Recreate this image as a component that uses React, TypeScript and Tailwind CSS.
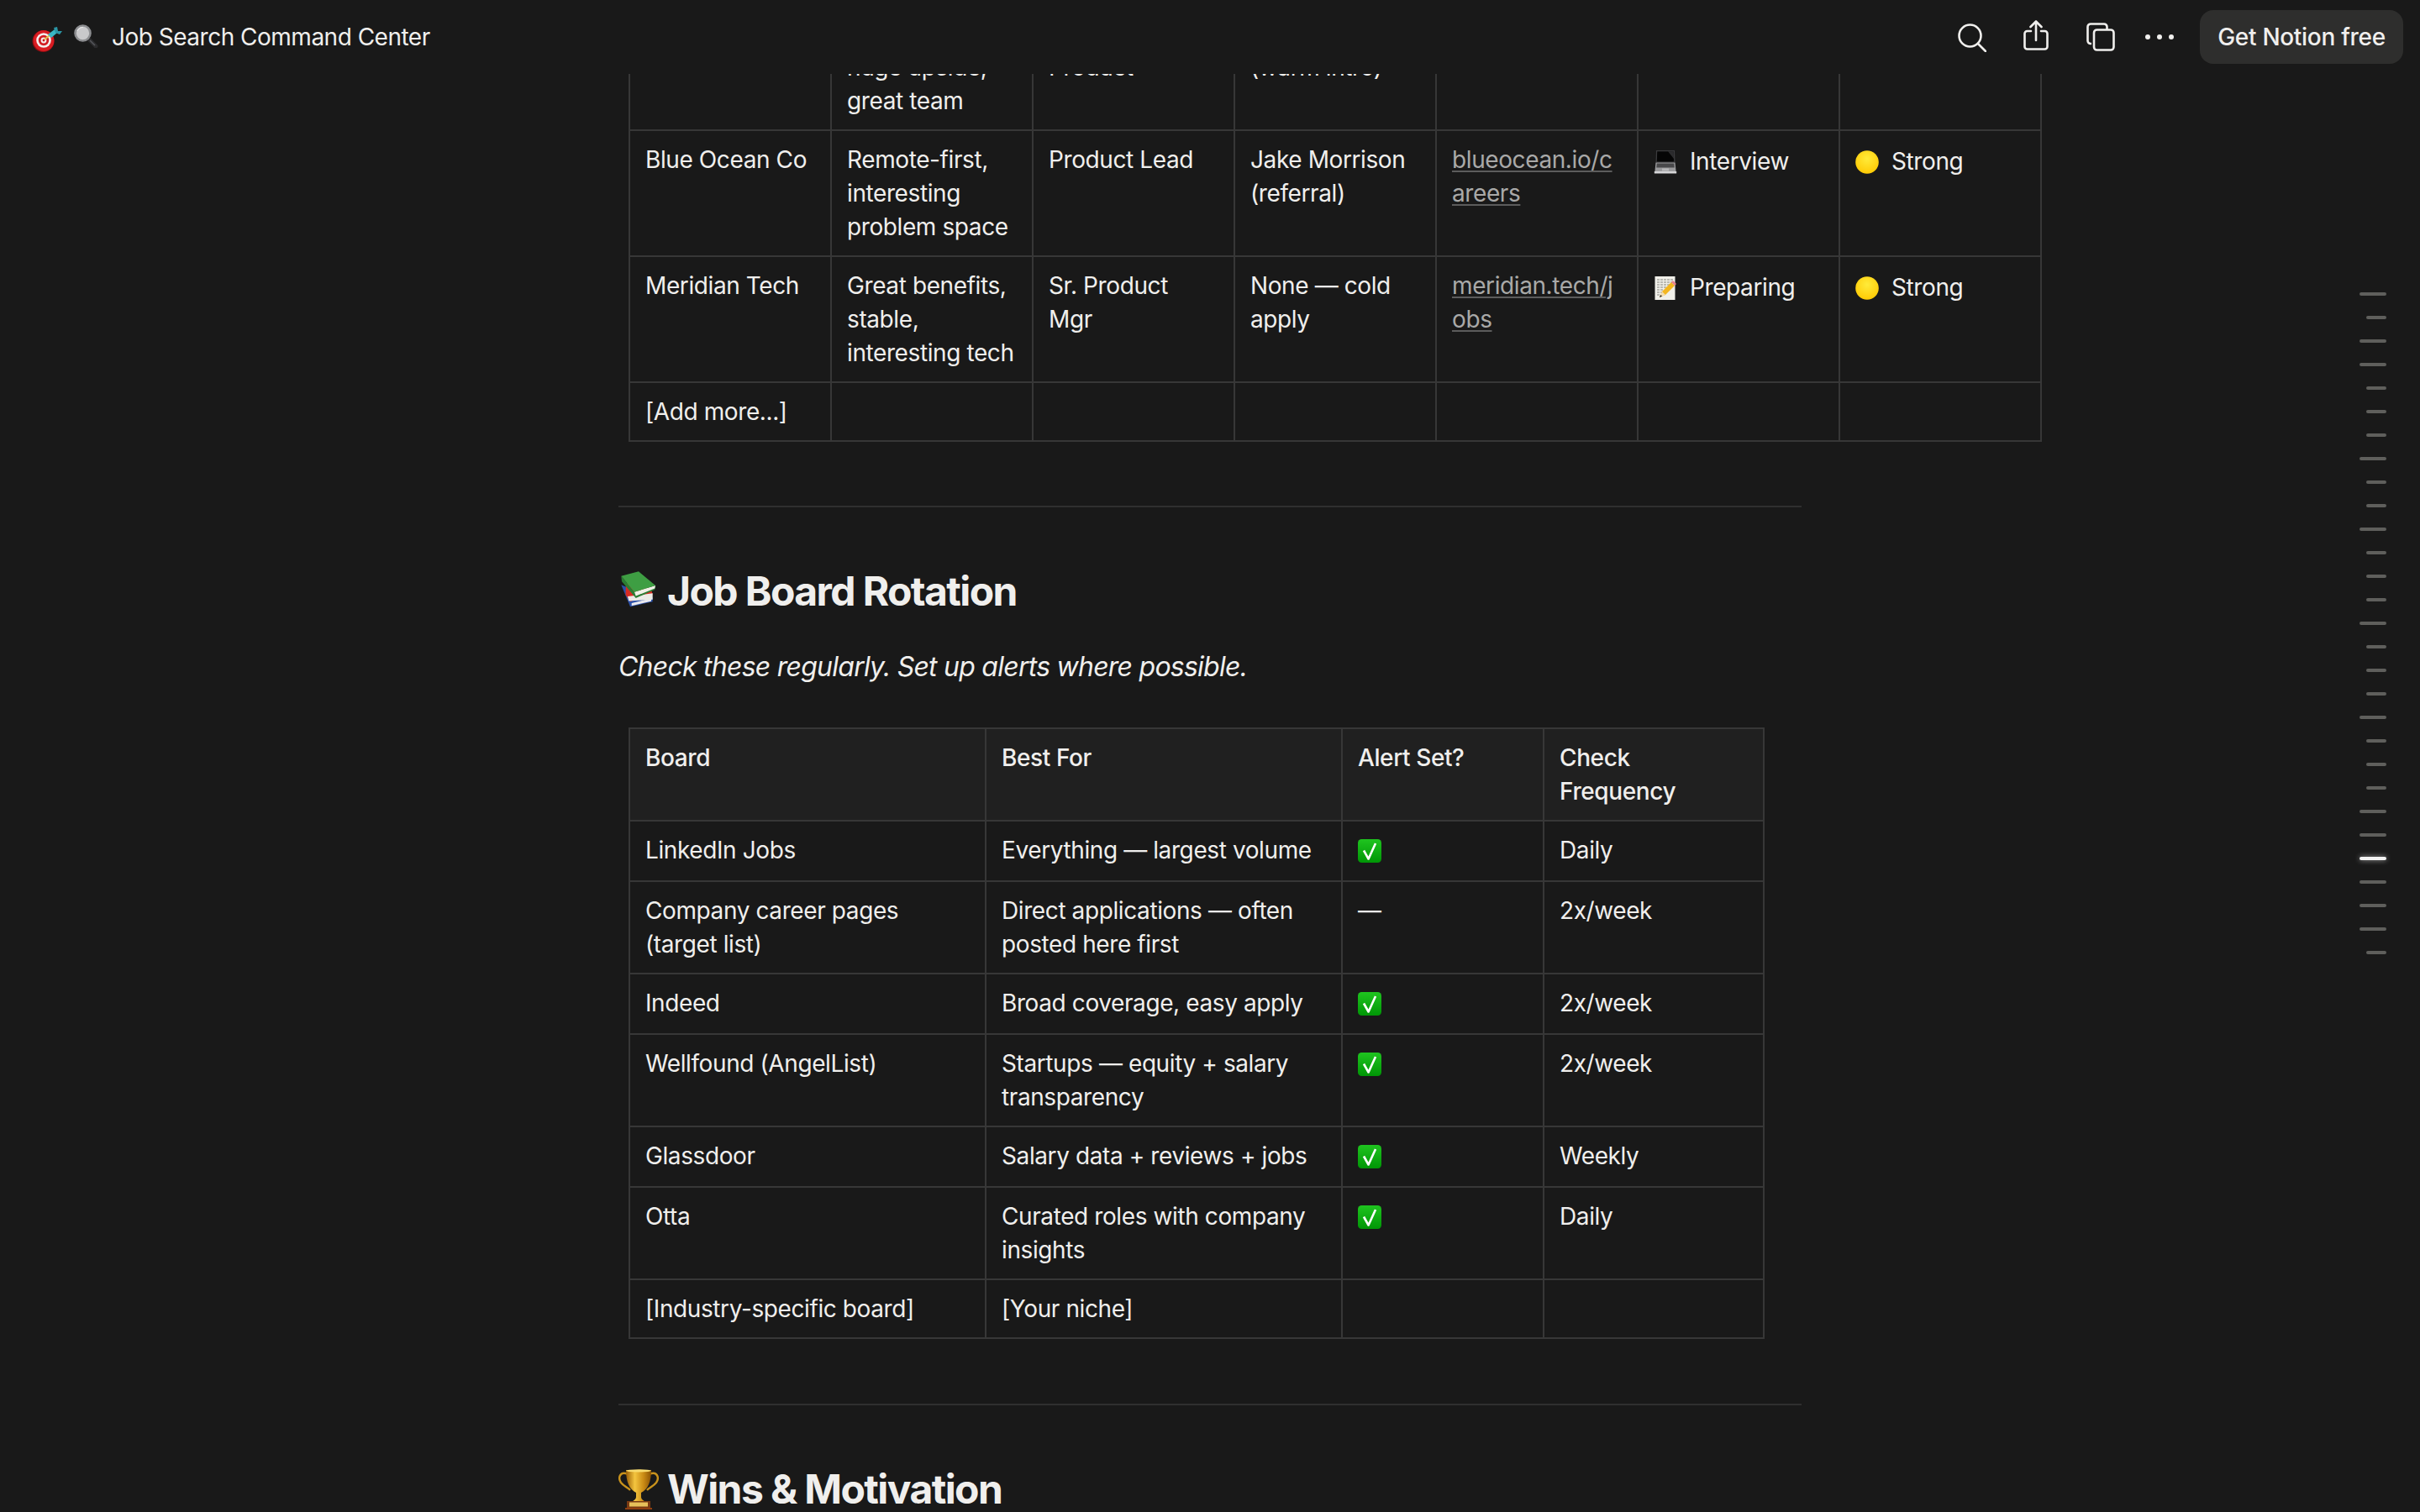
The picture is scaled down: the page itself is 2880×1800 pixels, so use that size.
const FONT = "font-['Inter','Noto_Sans',sans-serif]";
const CELL = "border-2 border-[#373737] px-[18px] py-[14px] align-top";

function Target() {
  return (
    <svg viewBox="0 0 36 30" className="w-[36px] h-[30px] shrink-0">
      <circle cx="13.5" cy="17" r="13" fill="#8f0d12" />
      <circle cx="14" cy="16.5" r="12.4" fill="#d81c22" />
      <circle cx="14" cy="16" r="8.8" fill="#f4eeee" />
      <circle cx="14" cy="16" r="6.2" fill="#d21c22" />
      <circle cx="14" cy="16" r="3.4" fill="#f4eeee" />
      <circle cx="14" cy="16" r="1.4" fill="#c81a20" />
      <path d="M15 15 L21 10" stroke="#e3c04a" strokeWidth="2" />
      <path d="M19 9 L27 3 L30 7 L23 13 Z" fill="#3ab6c4" />
      <path d="M26 1 L30 0 L31 5 L36 5 L33 9 L28 7 Z" fill="#2b96a6" />
    </svg>
  );
}

function Magnifier() {
  return (
    <svg viewBox="0 0 30 28" className="w-[30px] h-[28px] shrink-0">
      <path d="M18 17 L27 26" stroke="#2b2b2d" strokeWidth="5" strokeLinecap="round" />
      <path d="M20 19 L26 25" stroke="#55565a" strokeWidth="1.5" />
      <circle cx="11.5" cy="10.5" r="9" fill="#c9c9cb" stroke="#8d8e91" strokeWidth="2.6" />
      <path d="M5 8 A7.5 7.5 0 0 1 12 3.5" stroke="#e8e8e8" strokeWidth="1.2" fill="none" />
    </svg>
  );
}

function Laptop() {
  return (
    <svg viewBox="0 0 28 28" className="w-[28px] h-[28px] inline-block align-[-5px]">
      <path d="M3 0 H25 L25.5 14.5 H2.5 Z" fill="#3b3b3d" />
      <path d="M4.2 1.2 H23.8 L24.2 13.5 H3.8 Z" fill="#050505" />
      <path d="M17 1.2 H23.8 L24 10 Z" fill="#2c2c2e" />
      <path d="M2.5 14.5 H25.5 L26.6 25 H1.4 Z" fill="#9a9a9c" />
      <path d="M3.8 15.5 H24.2 L24.8 20.5 H3.2 Z" fill="#48484a" />
      <rect x="10" y="21.5" width="8" height="3" fill="#b8b8ba" />
      <rect x="0.8" y="25" width="26.4" height="2.5" rx="0.6" fill="#d6d6d8" />
    </svg>
  );
}

function Memo() {
  return (
    <svg viewBox="0 0 28 28" className="w-[28px] h-[28px] inline-block align-[-5px]">
      <rect x="1.5" y="0" width="24" height="28" fill="#f0efe9" />
      <path d="M4 4 H23 M4 7 H23 M4 10 H20 M4 13 H15 M4 16 H12 M4 19 H10 M4 22 H8" stroke="#85857f" strokeWidth="1" strokeDasharray="3 1" />
      <path d="M7 25 L10 18 L21 7 L25 11 L14 22 Z" fill="#f3b61f" />
      <path d="M7 25 L10 18 L14 22 Z" fill="#f3dcb0" />
      <path d="M7 25 L8.2 22 L10 23.8 Z" fill="#222" />
      <path d="M21 7 L23 5 L27 9 L25 11 Z" fill="#e8828e" />
    </svg>
  );
}

function Dot() {
  return (
    <svg viewBox="0 0 28 28" className="w-[28px] h-[28px] inline-block align-[-5px]">
      <defs>
        <radialGradient id="dotFill" cx="50%" cy="35%" r="70%">
          <stop offset="0%" stopColor="#ffeb3a" />
          <stop offset="100%" stopColor="#ffc800" />
        </radialGradient>
      </defs>
      <circle cx="14" cy="14" r="13.8" fill="url(#dotFill)" />
    </svg>
  );
}

function Check() {
  return (
    <svg viewBox="0 0 28 28" className="w-[28px] h-[28px] inline-block align-[-5px]">
      <defs>
        <linearGradient id="checkFill" x1="0" y1="0" x2="0" y2="1">
          <stop offset="0%" stopColor="#1fc41f" />
          <stop offset="100%" stopColor="#009606" />
        </linearGradient>
      </defs>
      <rect x="0" y="0" width="28" height="28" rx="4.5" fill="url(#checkFill)" />
      <path d="M7 13.5 L12.6 23.5 L21 5" stroke="#fff" strokeWidth="2.6" fill="none" strokeLinejoin="round" />
    </svg>
  );
}

function Books() {
  return (
    <svg viewBox="0 0 46 44" className="w-[46px] h-[44px] shrink-0 mr-[12px] mt-[-4px]">
      <path d="M3.3 16.3 L14 42.3 L40.7 36.3 L40.7 31.3 Z" fill="#2a4fa8" />
      <path d="M15.7 38 L39 32.3 L39 35.7 L15.7 41.3 Z" fill="#e8e8ee" />
      <path d="M9 14 L39 21.3 L40.7 28 L14 36 L8.5 28 Z" fill="#d62c22" />
      <path d="M11 30 L40.7 26.3 L40.7 33.7 L12.3 35.5 Z" fill="#ecebe6" />
      <path d="M3.3 5.7 L4 12.3 L19 30 L20.7 32 L43.3 22 L44 17 L19 24.7 Z" fill="#2b7d33" />
      <path d="M19 24.7 L44 17 L43.3 20.5 L20.7 29.5 Z" fill="#f0f0e6" />
      <path d="M3.3 5.7 L24 0.3 L44 17 L19 24.7 Z" fill="#3e9e43" />
    </svg>
  );
}

function Trophy() {
  return (
    <svg viewBox="0 0 48 48" className="w-[48px] h-[48px] shrink-0 mr-[10px]">
      <defs>
        <linearGradient id="cupFill" x1="0" y1="0" x2="1" y2="0">
          <stop offset="0%" stopColor="#9a5e06" />
          <stop offset="35%" stopColor="#f4c53f" />
          <stop offset="70%" stopColor="#c98a14" />
          <stop offset="100%" stopColor="#8a5205" />
        </linearGradient>
      </defs>
      <path d="M11 6 C2 2 -1 10 3 16 C6 20 11 22 14 25" stroke="#c8921c" strokeWidth="2.4" fill="none" />
      <path d="M37 6 C46 2 49 10 45 16 C42 20 37 22 34 25" stroke="#c8921c" strokeWidth="2.4" fill="none" />
      <path d="M9 1 H39 C39 15 35 24 27 28 V33 C27 36 30 37 32 39 H16 C18 37 21 36 21 33 V28 C13 24 9 15 9 1 Z" fill="url(#cupFill)" />
      <ellipse cx="24" cy="1.8" rx="15" ry="1.6" fill="#f9dc6e" />
      <rect x="10" y="38" width="28" height="8" fill="#7a3a12" />
      <rect x="13" y="39.5" width="22" height="5" fill="#e6c05a" />
      <rect x="8" y="46" width="32" height="2" fill="#8f3f10" />
    </svg>
  );
}

function SearchIcon() {
  return (
    <svg viewBox="0 0 34 34" className="w-[34px] h-[34px]" fill="none" stroke="#f0efed" strokeWidth="2.6" strokeLinecap="round">
      <circle cx="14.5" cy="14.5" r="13" />
      <path d="M24 24 L33 33" />
    </svg>
  );
}

function ShareIcon() {
  return (
    <svg viewBox="0 0 30 36" className="w-[30px] h-[36px]" fill="none" stroke="#f0efed" strokeWidth="2.6" strokeLinecap="round" strokeLinejoin="round">
      <path d="M9 13 H4.5 A3 3 0 0 0 1.5 16 V31.5 A3 3 0 0 0 4.5 34.5 H25.5 A3 3 0 0 0 28.5 31.5 V16 A3 3 0 0 0 25.5 13 H21" />
      <path d="M15 24 V2 M8.5 8 L15 1.5 L21.5 8" />
    </svg>
  );
}

function DuplicateIcon() {
  return (
    <svg viewBox="0 0 34 34" className="w-[34px] h-[34px]" fill="none" stroke="#f0efed" strokeWidth="2.6" strokeLinejoin="round">
      <path d="M6 25 H5 A3.5 3.5 0 0 1 1.5 21.5 V5 A3.5 3.5 0 0 1 5 1.5 H21 A3.5 3.5 0 0 1 24.5 5 V8" />
      <rect x="9" y="8.5" width="23.5" height="24" rx="3.5" />
    </svg>
  );
}

function Dots() {
  return (
    <div className="flex gap-[8px] items-center">
      <span className="w-[6px] h-[6px] rounded-full bg-[#f0efed]" />
      <span className="w-[6px] h-[6px] rounded-full bg-[#f0efed]" />
      <span className="w-[6px] h-[6px] rounded-full bg-[#f0efed]" />
    </div>
  );
}

function Status({ icon, label }: { icon: React.ReactNode; label: string }) {
  return <span className="block mt-[2px]">{icon}<span className="ml-[15px]">{label}</span></span>;
}

function Link({ children }: { children: string }) {
  return <a className="break-all text-[#a9a9a8] underline decoration-[#5c5c5c] decoration-2 underline-offset-[3px]">{children}</a>;
}

const pipeline: React.ReactNode[][] = [
  ["Northwind", "Fast growth, huge upside, great team", "Head of Product", "Sarah Chen (warm intro)", "", "", ""],
  ["Blue Ocean Co", "Remote-first, interesting problem space", "Product Lead", "Jake Morrison (referral)", <Link>blueocean.io/careers</Link>, <Status icon={<Laptop />} label="Interview" />, <Status icon={<Dot />} label="Strong" />],
  ["Meridian Tech", "Great benefits, stable, interesting tech", <>Sr. Product<br />Mgr</>, "None — cold apply", <Link>meridian.tech/jobs</Link>, <Status icon={<Memo />} label="Preparing" />, <Status icon={<Dot />} label="Strong" />],
  ["[Add more...]", "", "", "", "", "", ""],
];

const boards: { cells: React.ReactNode[]; cls: string }[] = [
  { cells: ["LinkedIn Jobs", "Everything — largest volume", <Check />, "Daily"], cls: "h-[72px]" },
  { cells: ["Company career pages (target list)", "Direct applications — often posted here first", "—", "2x/week"], cls: "" },
  { cells: ["Indeed", "Broad coverage, easy apply", <Check />, "2x/week"], cls: "h-[72px]" },
  { cells: ["Wellfound (AngelList)", "Startups — equity + salary transparency", <Check />, "2x/week"], cls: "" },
  { cells: ["Glassdoor", "Salary data + reviews + jobs", <Check />, "Weekly"], cls: "h-[72px]" },
  { cells: ["Otta", "Curated roles with company insights", <Check />, "Daily"], cls: "" },
  { cells: ["[Industry-specific board]", "[Your niche]", "", ""], cls: "" },
];

// long = section heading, short = sub heading in the page outline
const outline = ["l", "s", "l", "l", "s", "s", "s", "l", "s", "s", "l", "s", "s", "s", "l", "s", "s", "s", "l", "s", "s", "s", "l", "l", "a", "l", "l", "l", "s"];

export default function App() {
  return (
    <div className={`relative h-screen flex flex-col overflow-hidden bg-[#191919] text-[#f0efed] text-[28px] leading-[40px] tracking-[-0.4px] ${FONT}`}>
      <header className="relative z-10 h-[88px] shrink-0 flex items-center justify-between pl-[38px] pr-[20px] bg-[#191919]">
        <div className="flex items-center">
          <div className="mr-[13px] mt-[6px]"><Target /></div>
          <div className="mr-[16px] mt-[-2px]"><Magnifier /></div>
          <span className="tracking-[-0.5px]">Job Search Command Center</span>
        </div>
        <div className="flex items-center">
          <div className="mr-[44px] mt-[1px]"><SearchIcon /></div>
          <div className="mr-[45px] mt-[-4px]"><ShareIcon /></div>
          <div className="mr-[36px]"><DuplicateIcon /></div>
          <div className="mr-[31px]"><Dots /></div>
          <button className="h-[64px] w-[242px] rounded-[16px] bg-[#2e2e2d] font-medium tracking-[-0.3px] text-[#f0efed]">Get Notion free</button>
        </div>
      </header>

      <main className="flex-1 overflow-hidden">
        {/* scrolled position: first table starts above the header */}
        <div className="mt-[-84px] ml-[736px] w-[1408px]">
          <table className="ml-[12px] border-collapse table-fixed w-[1680px]">
            <tbody>
              {pipeline.map((row, i) => (
                <tr key={i}>
                  {row.map((c, j) => <td key={j} className={`${CELL} w-[240px]`}>{c}</td>)}
                </tr>
              ))}
            </tbody>
          </table>

          <div className="mt-[76px] h-[2px] bg-[#2f2f2f]" />

          <h2 className="mt-[70px] flex items-center text-[48px] leading-[60px] font-bold tracking-[-1.6px]">
            <Books />
            <span>Job Board Rotation</span>
          </h2>

          <p className="mt-[36px] text-[32px] leading-[48px] italic tracking-[-0.75px]">Check these regularly. Set up alerts where possible.</p>

          <table className="mt-[48px] ml-[12px] border-collapse table-fixed w-[1350px]">
            <thead>
              <tr>
                <th className={`${CELL} w-[424px] bg-[#202020] text-left font-medium`}>Board</th>
                <th className={`${CELL} w-[424px] bg-[#202020] text-left font-medium`}>Best For</th>
                <th className={`${CELL} w-[240px] bg-[#202020] text-left font-medium`}>Alert Set?</th>
                <th className={`${CELL} w-[262px] bg-[#202020] text-left font-medium`}>Check Frequency</th>
              </tr>
            </thead>
            <tbody>
              {boards.map((row, i) => (
                <tr key={i} className={row.cls}>
                  {row.cells.map((c, j) => <td key={j} className={CELL}>{c}</td>)}
                </tr>
              ))}
            </tbody>
          </table>

          <div className="mt-[77px] h-[2px] bg-[#2f2f2f]" />

          <h2 className="mt-[70px] flex items-center text-[48px] leading-[60px] font-bold tracking-[-1.6px]">
            <Trophy />
            <span>Wins &amp; Motivation</span>
          </h2>
        </div>
      </main>

      <nav className="absolute top-[348px] right-[40px] flex flex-col items-end gap-[24px]">
        {outline.map((t, i) => (
          t === "a"
            ? <div key={i} className="h-[4px] w-[32px] rounded-full bg-[#f2f2f2] shadow-[0_0_6px_rgba(255,255,255,0.6)]" />
            : <div key={i} className={`h-[4px] rounded-full bg-[#5f5f5c] ${t === "l" ? "w-[32px]" : "w-[24px]"}`} />
        ))}
      </nav>
    </div>
  );
}
